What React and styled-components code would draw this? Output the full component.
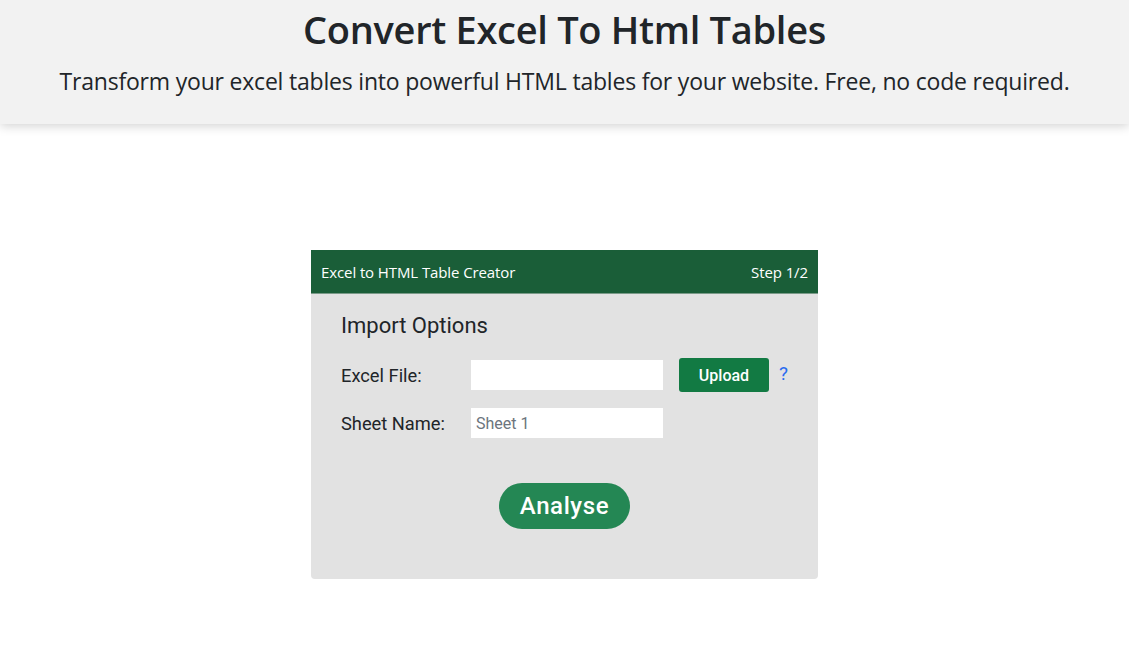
import React from "react";
import styled, { createGlobalStyle } from "styled-components";

const Global = createGlobalStyle`
  html, body { margin: 0; padding: 0; background: #fff; }
  body { font-family: "Open Sans", "Noto Sans", sans-serif; color: #212529; }
  * { box-sizing: border-box; }
`;

const Header = styled.header`
  background: #f2f2f2;
  height: 124px;
  box-shadow: 0 2px 10px rgba(0, 0, 0, 0.18);
  text-align: center;
  padding-top: 3px;
`;

const Title = styled.h1`
  margin: 0;
  font-family: "Open Sans", sans-serif;
  font-weight: 600;
  font-size: 38px;
  line-height: 52px;
  color: #212529;
  letter-spacing: -0.3px;
`;

const Subtitle = styled.p`
  margin: 11px 0 0;
  font-family: "Open Sans", sans-serif;
  font-size: 23px;
  line-height: 30px;
  color: #212529;
  letter-spacing: -0.2px;
`;

const Main = styled.main`
  display: flex;
  justify-content: center;
  padding-top: 126px;
`;

const Card = styled.section`
  width: 507px;
  background: #e2e2e2;
  border-radius: 0 0 4px 4px;
`;

const CardHeader = styled.div`
  background: #1a5e38;
  height: 44px;
  display: flex;
  align-items: center;
  justify-content: space-between;
  padding: 0 10px;
  color: #fff;
  font-family: "Open Sans", sans-serif;
  font-size: 15px;
  letter-spacing: -0.1px;
  border-bottom: 1px solid #7a9a88;
`;

const CardBody = styled.div`
  padding: 17px 30px 50px;
  font-family: Roboto, sans-serif;
`;

const SectionTitle = styled.h2`
  margin: 0 0 17px;
  font-family: Roboto, sans-serif;
  font-weight: 400;
  font-size: 22px;
  line-height: 30px;
  color: #212529;
`;

const Row = styled.div`
  display: flex;
  align-items: center;
  height: 34px;
  margin-bottom: ${(p) => p.$gap || 14}px;
`;

const Label = styled.label`
  width: 130px;
  font-size: 18.3px;
  color: #212529;
`;

const Input = styled.input`
  width: 192px;
  height: 30px;
  border: none;
  background: #fff;
  padding: 0 5px;
  font-family: Roboto, sans-serif;
  font-size: 16px;
  color: #333;
  outline: none;
  &::placeholder { color: #6c757d; }
`;

const UploadButton = styled.button`
  margin-left: 16px;
  width: 90px;
  height: 34px;
  background: #127a43;
  color: #fff;
  border: none;
  border-radius: 3px;
  font-family: Roboto, sans-serif;
  font-size: 16px;
  font-weight: 500;
`;

const Help = styled.a`
  margin-left: 10px;
  margin-top: -3px;
  color: #2a6bf0;
  font-family: Roboto, sans-serif;
  font-size: 19px;
  text-decoration: none;
`;

const Center = styled.div`
  display: flex;
  justify-content: center;
  padding-top: 29px;
`;

const AnalyseButton = styled.button`
  width: 131px;
  height: 46px;
  border-radius: 23px;
  background: #248754;
  color: #fff;
  border: none;
  font-family: Roboto, sans-serif;
  font-size: 24px;
  font-weight: 500;
  letter-spacing: 0.6px;
`;

export default function App() {
  return (
    <>
      <Global />
      <Header>
        <Title>Convert Excel To Html Tables</Title>
        <Subtitle>
          Transform your excel tables into powerful HTML tables for your website. Free, no code required.
        </Subtitle>
      </Header>
      <Main>
        <Card>
          <CardHeader>
            <span>Excel to HTML Table Creator</span>
            <span>Step 1/2</span>
          </CardHeader>
          <CardBody>
            <SectionTitle>Import Options</SectionTitle>
            <Row>
              <Label>Excel File:</Label>
              <Input type="text" />
              <UploadButton>Upload</UploadButton>
              <Help href="#">?</Help>
            </Row>
            <Row $gap={0}>
              <Label>Sheet Name:</Label>
              <Input type="text" placeholder="Sheet 1" />
            </Row>
            <Center>
              <AnalyseButton>Analyse</AnalyseButton>
            </Center>
          </CardBody>
        </Card>
      </Main>
    </>
  );
}
